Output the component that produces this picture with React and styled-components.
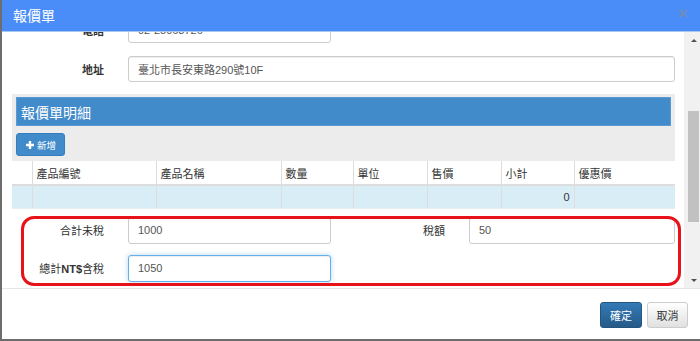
import React from "react";
import styled, { createGlobalStyle, css } from "styled-components";

const GlobalStyle = createGlobalStyle`
  html, body {
    margin: 0;
    padding: 0;
    background: #6d6d6d;
    overflow: hidden;
  }
  body {
    font-family: "Liberation Sans", "Noto Sans CJK TC", sans-serif;
    font-size: 11px;
    color: #333;
  }
  * {
    box-sizing: border-box;
  }
`;

const columns = [
  { key: "no", label: "", width: 20 },
  { key: "code", label: "產品編號", width: 124 },
  { key: "name", label: "產品名稱", width: 125 },
  { key: "qty", label: "數量", width: 72 },
  { key: "unit", label: "單位", width: 74 },
  { key: "price", label: "售價", width: 74 },
  { key: "subtotal", label: "小計", width: 73, align: "right" },
  { key: "discount", label: "優惠價", width: 101 },
];

const rows = [{ subtotal: 0 }];

function PlusIcon() {
  return (
    <svg width="8" height="8" viewBox="0 0 8 8">
      <path d="M2.8 0h2.4v2.8H8v2.4H5.2V8H2.8V5.2H0V2.8h2.8z" fill="#fff" />
    </svg>
  );
}

function ScrollBar({ thumbTop, thumbHeight }) {
  return (
    <Bar>
      <ArrowButton>
        <Arrow $dir="up" />
      </ArrowButton>
      <Track>
        <Thumb style={{ marginTop: thumbTop, height: thumbHeight }} />
      </Track>
      <ArrowButton>
        <Arrow $dir="down" />
      </ArrowButton>
    </Bar>
  );
}

function App() {
  return (
    <>
      <GlobalStyle />
      <Modal>
        <Header>
          <Title>報價單</Title>
          <Close>×</Close>
        </Header>
        <Body>
          <Content>
            <FormRow $scroll $inputWidth="203px">
              <Label>電話</Label>
              <Input readOnly value="02-25063726" />
            </FormRow>
            <FormRow>
              <Label>地址</Label>
              <Input readOnly value="臺北市長安東路290號10F" />
            </FormRow>

            <Panel>
              <PanelHeading>報價單明細</PanelHeading>
              <Toolbar>
                <AddButton>
                  <PlusIcon />
                  新增
                </AddButton>
              </Toolbar>
              <Table>
                <colgroup>
                  {columns.map((c) => (
                    <col key={c.key} style={{ width: c.width }} />
                  ))}
                </colgroup>
                <thead>
                  <tr>
                    {columns.map((c) => (
                      <Th key={c.key}>{c.label}</Th>
                    ))}
                  </tr>
                </thead>
                <tbody>
                  {rows.map((r, i) => (
                    <tr key={i}>
                      {columns.map((c) => (
                        <Td key={c.key} $align={c.align}>
                          {r[c.key]}
                        </Td>
                      ))}
                    </tr>
                  ))}
                </tbody>
              </Table>
            </Panel>

            <Totals>
              <SumLabel>合計未稅</SumLabel>
              <Input $tall readOnly value="1000" />
              <SumLabel>稅額</SumLabel>
              <Input $tall readOnly value="50" />
              <SumLabel>
                總計<b>NT$</b>含稅
              </SumLabel>
              <Input $tall $focused readOnly value="1050" />
            </Totals>
          </Content>
          <ScrollBar thumbTop={63} thumbHeight={111} />
        </Body>
        <Footer>
          <Button $primary>確定</Button>
          <Button>取消</Button>
        </Footer>
      </Modal>
    </>
  );
}

const Modal = styled.div`
  margin-left: 2px;
  width: 698px;
  height: 339px;
  background: #fff;
  display: flex;
  flex-direction: column;
`;

const Header = styled.div`
  flex: none;
  height: 32px;
  background: #4b8df8;
  border-bottom: 1px solid #a9c6f3;
  display: flex;
  align-items: center;
  justify-content: space-between;
  padding: 0 12px 1px 11px;
`;

const Title = styled.div`
  color: #fff;
  font-size: 14px;
`;

const Close = styled.div`
  color: #6f8dbd;
  font-size: 17px;
  font-weight: bold;
  line-height: 1;
  margin-top: -3px;
`;

const Body = styled.div`
  flex: none;
  height: 256px;
  display: flex;
  overflow: hidden;
`;

const Content = styled.div`
  flex: 1;
  overflow: hidden;
  padding: 0 9px 0 10px;
`;

const FormRow = styled.div`
  display: grid;
  grid-template-columns: 92px ${(p) => p.$inputWidth || "1fr"};
  column-gap: 24px;
  align-items: center;
  margin-top: ${(p) => (p.$scroll ? "-15px" : "13px")};
`;

const Label = styled.label`
  text-align: right;
  font-weight: bold;
  color: #333;
  font-size: 11px;
`;

const SumLabel = styled.label`
  text-align: right;
  color: #333;
  font-size: 11px;

  b {
    font-weight: bold;
  }
`;

const Input = styled.input`
  display: block;
  width: 100%;
  height: ${(p) => (p.$tall ? "27px" : "26px")};
  border: 1px solid #ccc;
  border-radius: 3px;
  padding: 0 9px;
  font-family: "Liberation Sans", "Noto Sans CJK TC", sans-serif;
  font-size: 11px;
  color: #555;
  background: #fff;
  outline: none;
  box-shadow: inset 0 1px 1px rgba(0, 0, 0, 0.075);

  ${(p) =>
    p.$focused &&
    css`
      border-color: #66afe9;
      box-shadow: inset 0 1px 1px rgba(0, 0, 0, 0.075),
        0 0 5px rgba(102, 175, 233, 0.5);
    `}
`;

const Panel = styled.div`
  margin-top: 12px;
  background: #ececec;
  padding-top: 3px;
`;

const PanelHeading = styled.div`
  margin: 0 4px;
  height: 29px;
  background: #428bca;
  border: 1px solid #5c9ad3;
  color: #fff;
  font-size: 14px;
  display: flex;
  align-items: center;
  padding-left: 4px;
`;

const Toolbar = styled.div`
  display: flex;
  padding: 7px 4px 5px;
`;

const AddButton = styled.button`
  height: 23px;
  width: 49px;
  display: inline-flex;
  align-items: center;
  gap: 3px;
  padding: 0 0 0 9px;
  background: #428bca;
  border: 1px solid #357ebd;
  border-radius: 3px;
  color: #fff;
  font-family: "Liberation Sans", "Noto Sans CJK TC", sans-serif;
  font-size: 9.5px;
`;

const Table = styled.table`
  width: 100%;
  border-collapse: collapse;
  table-layout: fixed;
  background: #fff;
`;

const Th = styled.th`
  height: 24px;
  padding: 0 4px;
  text-align: left;
  font-weight: normal;
  font-size: 11px;
  color: #333;
  border-left: 1px solid #ddd;
  border-bottom: 2px solid #ddd;

  &:first-child {
    border-left: none;
  }
`;

const Td = styled.td`
  height: 23px;
  padding: 0 4px;
  background: #d9edf7;
  text-align: ${(p) => p.$align || "left"};
  font-size: 11px;
  color: #333;
  border-left: 1px solid #ddd;
  border-bottom: 1px solid #e6eef2;

  &:first-child {
    border-left: none;
  }
`;

const Totals = styled.div`
  position: relative;
  margin-top: 8px;
  display: grid;
  grid-template-columns: 92px 203px 1fr 206px;
  grid-auto-rows: 27px;
  column-gap: 24px;
  row-gap: 11px;
  align-items: center;

  &::after {
    content: "";
    position: absolute;
    left: 9px;
    right: -6px;
    top: -1px;
    bottom: -4px;
    border: 3px solid #e8121b;
    border-radius: 13px;
    pointer-events: none;
  }
`;

const Bar = styled.div`
  flex: none;
  width: 16px;
  display: flex;
  flex-direction: column;
  background: #f1f1f1;
`;

const ArrowButton = styled.div`
  flex: none;
  height: 16px;
  display: flex;
  align-items: center;
  justify-content: center;
  padding-left: 3px;
`;

const Arrow = styled.div`
  width: 0;
  height: 0;
  border-left: 3px solid transparent;
  border-right: 3px solid transparent;
  ${(p) =>
    p.$dir === "up"
      ? css`
          border-bottom: 3px solid #505050;
        `
      : css`
          border-top: 3px solid #505050;
        `}
`;

const Track = styled.div`
  flex: 1;
  display: flex;
  flex-direction: column;
`;

const Thumb = styled.div`
  margin: 0 1px 0 4px;
  background: #c1c1c1;
`;

const Footer = styled.div`
  flex: 1;
  border-top: 1px solid #e5e5e5;
  display: flex;
  justify-content: flex-end;
  align-items: flex-start;
  gap: 5px;
  padding: 13px 12px 0 0;
`;

const Button = styled.button`
  height: 26px;
  width: ${(p) => (p.$primary ? "42px" : "41px")};
  border-radius: 3px;
  font-family: "Liberation Sans", "Noto Sans CJK TC", sans-serif;
  font-size: 11px;
  padding: 0;
  ${(p) =>
    p.$primary
      ? css`
          color: #fff;
          background: linear-gradient(#337ab7, #265a88);
          border: 1px solid #245580;
        `
      : css`
          color: #333;
          background: linear-gradient(#fff, #e0e0e0);
          border: 1px solid #ccc;
        `}
`;

export default App;
